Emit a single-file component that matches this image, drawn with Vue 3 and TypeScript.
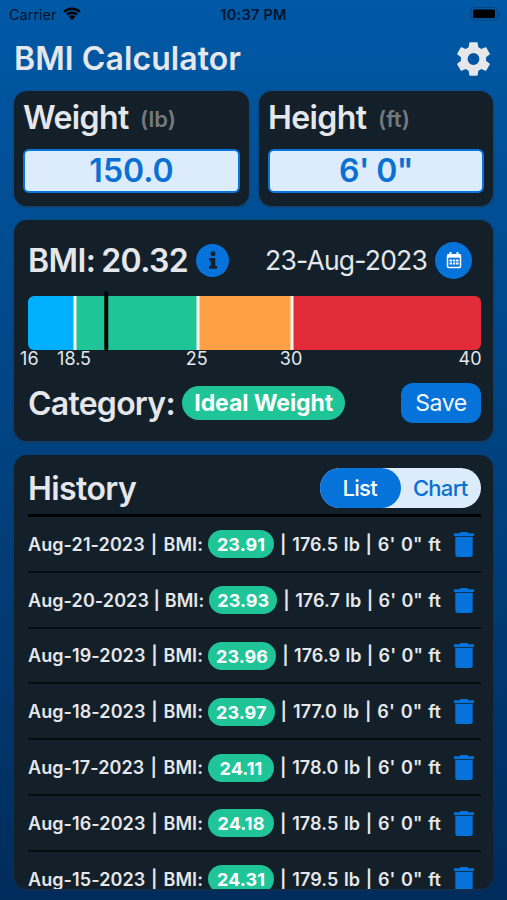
<script setup lang="ts">
import { ref } from 'vue'

interface Entry {
  date: string
  bmi: string
  weight: string
}

const MIN = 16
const MAX = 40
const pct = (v: number): string => `${((v - MIN) / (MAX - MIN)) * 100}%`

const zones = [
  { name: 'under', span: 2.5 },
  { name: 'ideal', span: 6.5 },
  { name: 'over', span: 5 },
  { name: 'obese', span: 10 },
]
const dividers = [18.5, 25, 30]
const ticks = [
  { value: 16, at: 16.07 },
  { value: 18.5, at: 18.44 },
  { value: 25, at: 24.94 },
  { value: 30, at: 29.94 },
  { value: 40, at: 39.42 },
]

const view = ref<'List' | 'Chart'>('List')
const history: Entry[] = [
  { date: 'Aug-21-2023', bmi: '23.91', weight: '176.5' },
  { date: 'Aug-20-2023', bmi: '23.93', weight: '176.7' },
  { date: 'Aug-19-2023', bmi: '23.96', weight: '176.9' },
  { date: 'Aug-18-2023', bmi: '23.97', weight: '177.0' },
  { date: 'Aug-17-2023', bmi: '24.11', weight: '178.0' },
  { date: 'Aug-16-2023', bmi: '24.18', weight: '178.5' },
  { date: 'Aug-15-2023', bmi: '24.31', weight: '179.5' },
]
</script>

<template>
  <main class="app">
    <div class="status">
      <div class="carrier">
        <span>Carrier</span>
        <svg class="wifi" viewBox="0 0 18 13">
          <path d="M1.2 4.9a11 11 0 0 1 15.6 0M4 7.7a7.1 7.1 0 0 1 10 0" fill="none" stroke="currentColor" stroke-width="2.5" />
          <path d="M9 12.9 5.8 9.7a4.5 4.5 0 0 1 6.4 0z" fill="currentColor" />
        </svg>
      </div>
      <span class="clock">10:37 PM</span>
      <svg class="battery" viewBox="0 0 30 14">
        <rect x=".5" y=".5" width="27" height="12.5" rx="4" fill="none" stroke="#02457f" />
        <rect x="3" y="2.5" width="22" height="8.5" rx="1.5" fill="#000" />
        <path d="M28.5 4.6q1.5.8 1.5 2.2t-1.5 2.2z" fill="#02457f" />
      </svg>
    </div>

    <header class="header">
      <h1>BMI Calculator</h1>
      <svg class="gear" viewBox="2.2 1.9 19.6 20.2">
        <path
          fill="currentColor"
          d="M12 15.5A3.5 3.5 0 0 1 8.5 12 3.5 3.5 0 0 1 12 8.5a3.5 3.5 0 0 1 3.5 3.5 3.5 3.5 0 0 1-3.5 3.5m7.43-2.53c.04-.32.07-.64.07-.97s-.03-.66-.07-1l2.11-1.63c.19-.15.24-.42.12-.64l-2-3.46c-.12-.22-.39-.31-.61-.22l-2.49 1c-.52-.39-1.06-.73-1.69-.98l-.37-2.65A.506.506 0 0 0 14 2h-4c-.25 0-.46.18-.5.42l-.37 2.65c-.63.25-1.17.59-1.69.98l-2.49-1c-.22-.09-.49 0-.61.22l-2 3.46c-.13.22-.07.49.12.64L4.57 11c-.04.34-.07.67-.07 1s.03.65.07.97l-2.11 1.66c-.19.15-.25.42-.12.64l2 3.46c.12.22.39.3.61.22l2.49-1.01c.52.4 1.06.74 1.69.99l.37 2.65c.04.24.25.42.5.42h4c.25 0 .46-.18.5-.42l.37-2.65c.63-.26 1.17-.59 1.69-.99l2.49 1.01c.22.08.49 0 .61-.22l2-3.46c.12-.22.07-.49-.12-.64z"
        />
      </svg>
    </header>

    <section class="inputs">
      <div class="card field">
        <h2>Weight <small>(lb)</small></h2>
        <div class="value">150.0</div>
      </div>
      <div class="card field">
        <h2>Height <small>(ft)</small></h2>
        <div class="value feet">6' 0"</div>
      </div>
    </section>

    <section class="card result">
      <div class="summary">
        <h2 class="bmi">BMI: 20.32</h2>
        <span class="info">
          <svg viewBox="0 0 10 18">
            <circle cx="5" cy="2.7" r="2.5" fill="currentColor" />
            <path d="M1 7h6.3v8H9v2.8H1V15h1.7V9.8H1z" fill="currentColor" />
          </svg>
        </span>
        <span class="date">23-Aug-2023</span>
        <span class="calendar">
          <svg viewBox="0 0 16 17">
            <path d="M4.5 0v3M11.5 0v3" stroke="currentColor" stroke-width="2" />
            <rect x="1.5" y="2.8" width="13" height="12.7" rx="1.3" fill="none" stroke="currentColor" stroke-width="1.5" />
            <path d="M1 2.5h14v3.2H1z" fill="currentColor" />
            <path d="M3.5 7.5H6v2H3.5zM6.8 7.5h2.500v2H6.800zM10.100 7.500h2.500v2h-2.500zM3.500 10.500H6v2H3.500zM6.800 10.500h2.500v2H6.800zM10.100 10.500h2.500v2h-2.500z" fill="currentColor" />
          </svg>
        </span>
      </div>

      <div class="scale">
        <div class="zones">
          <i v-for="z in zones" :key="z.name" :class="z.name" :style="{ flexGrow: z.span }"></i>
        </div>
        <b v-for="d in dividers" :key="d" class="divider" :style="{ left: pct(d) }"></b>
        <b class="marker" :style="{ left: pct(20.14) }"></b>
        <span v-for="t in ticks" :key="t.value" class="tick" :style="{ left: pct(t.at) }">{{ t.value }}</span>
      </div>

      <div class="category">
        <h2>Category:</h2>
        <span class="badge">Ideal Weight</span>
        <button class="save" type="button">Save</button>
      </div>
    </section>

    <section class="card history">
      <div class="history-head">
        <h2>History</h2>
        <div class="toggle">
          <button
            v-for="name in (['List', 'Chart'] as const)"
            :key="name"
            type="button"
            :class="{ active: view === name }"
            @click="view = name"
          >{{ name }}</button>
        </div>
      </div>
      <ul>
        <li v-for="e in history" :key="e.date">
          <span class="when">{{ e.date }} | BMI:</span>
          <span class="pill">{{ e.bmi }}</span>
          <span class="stats">| {{ e.weight }} lb | 6' 0" ft</span>
          <svg class="trash" viewBox="0 0 20 25">
            <path d="M0 1.3h5.500L6.500 0h7l1 1.300H20V4H0zM1.300 4.800h17.400V22.500a2.500 2.500 0 0 1-2.500 2.500H3.800a2.500 2.500 0 0 1-2.500-2.500z" fill="currentColor" />
          </svg>
        </li>
      </ul>
    </section>
  </main>
</template>

<style>
body {
  margin: 0;
  overflow: hidden;
}
</style>

<style scoped>
* {
  box-sizing: border-box;
}
.app {
  height: 900px;
  padding: 0 14px 11px;
  display: flex;
  flex-direction: column;
  font-family: Inter, "Liberation Sans", sans-serif;
  color: #e5e7eb;
  background: linear-gradient(#0059a6, #002c5c);
}
h1,
h2 {
  margin: 0;
  font-size: 32px;
  font-weight: 600;
  line-height: 40px;
  white-space: nowrap;
}
h1 {
  padding-top: 1px;
  letter-spacing: 0.08px;
}
h2 {
  padding-top: 1px;
  letter-spacing: -0.6px;
}
button {
  border: 0;
  padding: 0;
  font-family: inherit;
  background: none;
}
.status {
  height: 28px;
  margin: 0 -7px 0 -5px;
  display: grid;
  grid-template-columns: 1fr auto 1fr;
  align-items: center;
  color: #00142c;
  font-size: 14.5px;
}
.carrier {
  display: flex;
  align-items: center;
  gap: 6px;
}
.wifi {
  width: 18px;
  height: 13px;
  margin-top: -2px;
  color: #000;
}
.clock {
  margin-left: -2px;
  font-weight: 600;
  letter-spacing: 0.25px;
}
.battery {
  justify-self: end;
  width: 30px;
  height: 14px;
  margin-top: -1px;
}
.header {
  height: 63px;
  padding: 0 3px 2px 0;
  display: flex;
  align-items: center;
  justify-content: space-between;
}
.gear {
  width: 33px;
  height: 34px;
}
.card {
  background: #13202a;
  border-radius: 13px;
  box-shadow: 0 1px 3px rgba(40, 50, 60, 0.7);
}
.inputs {
  display: grid;
  grid-template-columns: 235px 234px;
  gap: 10px;
  height: 115px;
}
.field {
  padding: 6px 9px 0;
}
small {
  margin-left: 4px;
  font-size: 22px;
  letter-spacing: 0;
  color: #75797e;
  vertical-align: 2px;
}
.value {
  height: 44px;
  margin-top: 10px;
  border: 2px solid #0b74dc;
  border-radius: 6px;
  background: #dcecfd;
  color: #0b70d4;
  font-size: 32px;
  font-weight: 600;
  line-height: 40px;
  text-align: center;
}
.feet {
  letter-spacing: -0.6px;
}
.result {
  height: 221px;
  margin-top: 14px;
  padding: 20px 12px 0 14px;
}
.summary {
  height: 40px;
  display: flex;
  align-items: center;
}
.bmi {
  word-spacing: -1.5px;
}
.info,
.calendar {
  display: flex;
  align-items: center;
  justify-content: center;
  flex: none;
  border-radius: 50%;
  background: #0573da;
}
.info {
  width: 33px;
  height: 33px;
  margin-left: 8px;
  color: #13202a;
}
.info svg {
  width: 10px;
  height: 18px;
}
.date {
  margin-left: auto;
  font-size: 26.5px;
  font-weight: 400;
  letter-spacing: -0.8px;
  white-space: nowrap;
}
.calendar {
  width: 37px;
  height: 37px;
  margin: 0 9px 0 8px;
  color: #fff;
}
.calendar svg {
  width: 16px;
  height: 17px;
}
.scale {
  position: relative;
  height: 54px;
  margin-top: 16px;
}
.zones {
  display: flex;
  height: 100%;
  border-radius: 6px;
  overflow: hidden;
}
.zones i {
  flex-basis: 0;
}
.under {
  background: #00b0ff;
}
.ideal {
  background: #1fc597;
}
.over {
  background: #ffa047;
}
.obese {
  background: #e22b38;
}
.divider,
.marker {
  position: absolute;
  width: 3px;
  transform: translateX(-50%);
}
.divider {
  top: 0;
  bottom: 0;
  background: #f4f6f3;
}
.marker {
  top: -5px;
  bottom: -1px;
  width: 3.5px;
  border-radius: 2px;
  background: #000;
}
.tick {
  position: absolute;
  top: 53px;
  transform: translateX(-50%);
  font-size: 18px;
  line-height: 20px;
}
.category {
  display: flex;
  align-items: center;
  height: 40px;
  margin-top: 33px;
}
.category h2 {
  letter-spacing: -0.75px;
}
.badge {
  height: 34px;
  margin-left: 7.5px;
  padding: 0 12px;
  border-radius: 17px;
  background: #1fc597;
  color: #fff;
  font-size: 23px;
  font-weight: 700;
  letter-spacing: -0.1px;
  line-height: 34px;
  white-space: nowrap;
}
.save {
  width: 80px;
  height: 40px;
  margin-left: auto;
  border-radius: 12px;
  background: #0573da;
  color: #f1f5f9;
  font-size: 23px;
  letter-spacing: -0.4px;
}
.history {
  flex: 1;
  min-height: 0;
  margin-top: 14px;
  padding: 13px 12px 0 14px;
  overflow: hidden;
}
.history-head {
  display: flex;
  justify-content: space-between;
  height: 49px;
  border-bottom: 3px solid #000;
}
.toggle {
  display: flex;
  width: 161px;
  height: 40px;
  border-radius: 20px;
  background: #dcecfd;
}
.toggle button {
  width: 50%;
  padding-right: 1px;
  border-radius: 20px;
  color: #0b70d4;
  font-size: 22px;
  font-weight: 500;
  letter-spacing: -0.7px;
}
.toggle .active {
  background: #0573da;
  color: #fff;
}
ul {
  margin: 0;
  padding: 0;
  list-style: none;
}
li {
  height: 55.8px;
  padding: 1px 7px 0 0;
  display: flex;
  align-items: center;
  border-bottom: 2px solid #060c12;
  font-size: 18px;
  font-weight: 600;
  letter-spacing: 0.08px;
  white-space: nowrap;
}
.when {
  min-width: 175px;
  text-align-last: justify;
}
.pill {
  min-width: 66px;
  height: 28px;
  margin: 0 6px 0 5px;
  padding: 0 8px;
  border-radius: 14px;
  background: #1fc597;
  color: #fff;
  font-weight: 700;
  line-height: 29px;
  text-align: center;
}
.stats {
  flex: 1;
  text-align-last: justify;
}
.trash {
  flex: none;
  width: 20px;
  height: 25px;
  margin-left: 13px;
  color: #0573da;
}
</style>
